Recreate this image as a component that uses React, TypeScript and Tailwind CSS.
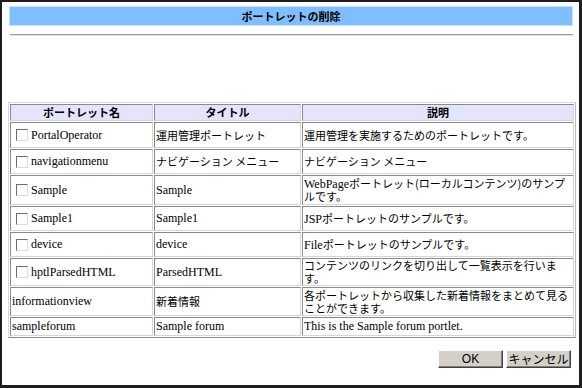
import React from 'react';

type Row = {
  name: string;
  check: boolean;
  title: React.ReactNode;
  desc: React.ReactNode[];
  h: string;
};

const J: React.FC<{ children: React.ReactNode }> = ({ children }) => (
  <span className="text-[11px] [font-family:'Noto_Sans_CJK_JP',sans-serif]">{children}</span>
);

// one text line of fixed height, so mixed fonts don't stretch the row
const Line: React.FC<{ children: React.ReactNode }> = ({ children }) => (
  <div className="h-[13px] leading-[13px] whitespace-nowrap">{children}</div>
);

const rows: Row[] = [
  {
    name: 'PortalOperator',
    check: true,
    title: <J>運用管理ポートレット</J>,
    desc: [<J>運用管理を実施するためのポートレットです。</J>],
    h: 'h-[26px]',
  },
  {
    name: 'navigationmenu',
    check: true,
    title: <J>ナビゲーション メニュー</J>,
    desc: [<J>ナビゲーション メニュー</J>],
    h: 'h-[25px]',
  },
  {
    name: 'Sample',
    check: true,
    title: 'Sample',
    desc: [
      <>
        WebPage<J>ポートレット(ローカルコンテンツ)のサンプ</J>
      </>,
      <J>ルです。</J>,
    ],
    h: 'h-[30px]',
  },
  {
    name: 'Sample1',
    check: true,
    title: 'Sample1',
    desc: [
      <>
        JSP<J>ポートレットのサンプルです。</J>
      </>,
    ],
    h: 'h-[25px]',
  },
  {
    name: 'device',
    check: true,
    title: 'device',
    desc: [
      <>
        File<J>ポートレットのサンプルです。</J>
      </>,
    ],
    h: 'h-[25px]',
  },
  {
    name: 'hptlParsedHTML',
    check: true,
    title: 'ParsedHTML',
    desc: [<J>コンテンツのリンクを切り出して一覧表示を行いま</J>, <J>す。</J>],
    h: 'h-[27px]',
  },
  {
    name: 'informationview',
    check: false,
    title: <J>新着情報</J>,
    desc: [<J>各ポートレットから収集した新着情報をまとめて見る</J>, <J>ことができます。</J>],
    h: 'h-[29px]',
  },
  {
    name: 'sampleforum',
    check: false,
    title: 'Sample forum',
    desc: ['This is the Sample forum portlet.'],
    h: 'h-[19px]',
  },
];

const cell =
  'px-[1px] py-0 align-middle text-left border border-t-[#8a8a8a] border-l-[#8a8a8a] border-r-[#d6d6d6] border-b-[#d6d6d6] leading-[13px]';
const head =
  'p-0 h-[17px] align-middle text-center leading-[13px] bg-[#e4e4fc] font-bold text-[11px] [font-family:"Noto_Sans_CJK_JP",sans-serif] border border-t-[#8a8a8a] border-l-[#8a8a8a] border-r-[#d6d6d6] border-b-[#d6d6d6]';

const Checkbox: React.FC = () => (
  <span className="inline-block align-middle w-[12px] h-[12px] ml-[4px] mr-[3px] -mt-[1px] bg-white border border-t-[#6e6e6e] border-l-[#6e6e6e] border-r-[#dcdcdc] border-b-[#dcdcdc]" />
);

const Btn: React.FC<{ children: React.ReactNode; className?: string }> = ({ children, className }) => (
  <button
    className={
      'w-[65px] h-[18px] bg-[#d4d0c8] text-black text-[12px] leading-none border border-t-white border-l-white border-r-[#404040] border-b-[#404040] shadow-[inset_-1px_-1px_0_#808080] ' +
      (className ?? '')
    }
  >
    {children}
  </button>
);

export default function App() {
  return (
    <div className="w-[582px] h-[388px] bg-white border-l-2 border-t-2 border-r-[3px] border-b-[3px] border-[#1e1e1e] text-black [font-family:'Liberation_Serif','Noto_Sans_CJK_JP',serif] text-[12px]">
      <div className="mt-[4px] ml-[7px] w-[564px] h-[20px] bg-[#7fbfff] border border-[#c4e2ff] flex items-center justify-center">
        <span className="font-bold text-[11px] [font-family:'Noto_Sans_CJK_JP',sans-serif]">ポートレットの削除</span>
      </div>
      <div className="mt-[8px] ml-[8px] w-[563px] h-[2px] border-t border-t-[#9a9a9a] border-b border-b-[#e2e2e2]" />

      <table className="mt-[66px] ml-[6px] w-[568px] table-fixed border-separate border-spacing-[1px] border border-t-[#d8d8d8] border-l-[#d8d8d8] border-r-[#bcbcbc] border-b-[#8a8a8a]">
        <thead>
          <tr>
            <th className={head + ' w-[143px]'}>ポートレット名</th>
            <th className={head + ' w-[147px]'}>タイトル</th>
            <th className={head + ' w-[272px]'}>説明</th>
          </tr>
        </thead>
        <tbody>
          {rows.map((r) => (
            <tr key={r.name}>
              <td className={cell + ' ' + r.h}>
                <Line>
                  {r.check && <Checkbox />}
                  {r.name}
                </Line>
              </td>
              <td className={cell + ' ' + r.h}>
                <Line>{r.title}</Line>
              </td>
              <td className={cell + ' ' + r.h}>
                {r.desc.map((d, i) => (
                  <Line key={i}>{d}</Line>
                ))}
              </td>
            </tr>
          ))}
        </tbody>
      </table>

      <div className="mt-[12px] pr-[8px] flex justify-end gap-[3px]">
        <Btn className="[font-family:'Liberation_Sans',sans-serif]">OK</Btn>
        <Btn className="[font-family:'Noto_Sans_CJK_JP',sans-serif]">キャンセル</Btn>
      </div>
    </div>
  );
}
